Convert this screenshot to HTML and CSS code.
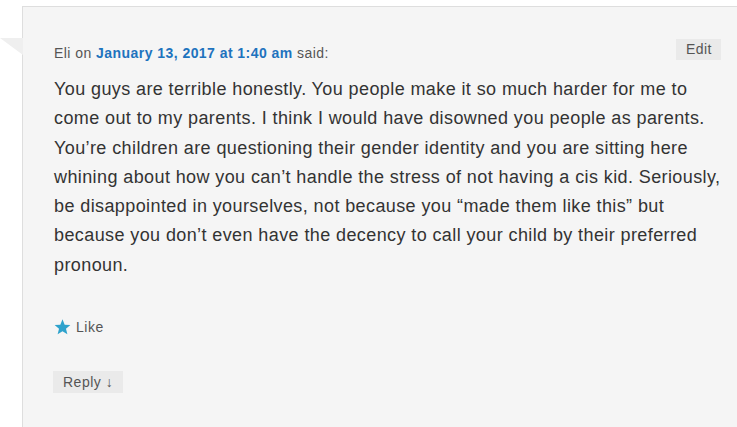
FILE: index.html
```html
<!DOCTYPE html>
<html>
<head>
<meta charset="utf-8">
<link rel="stylesheet" href="styles.css">
</head>
<body>
<div class="wrap">
  <div class="comment">
    <span class="arrow"></span>
    <div class="meta-row">
      <p class="meta">Eli on <a href="#">January 13, 2017 at 1:40 am</a> said:</p>
      <a class="edit" href="#">Edit</a>
    </div>
    <p class="body">You guys are terrible honestly. You people make it so much harder for me to come out to my parents. I think I would have disowned you people as parents. You’re children are questioning their gender identity and you are sitting here whining about how you can’t handle the stress of not having a cis kid. Seriously, be disappointed in yourselves, not because you “made them like this” but because you don’t even have the decency to call your child by their preferred pronoun.</p>
    <div class="like">
      <svg class="star" width="17" height="16" viewBox="0 0 24 23"><path d="M12 0.5l3.1 7.6 8.2 0.6-6.3 5.3 2 8-7-4.4-7 4.4 2-8L0.7 8.7l8.2-0.6z" fill="#2ea2cc"/></svg>
      <span>Like</span>
    </div>
    <a class="reply" href="#">Reply ↓</a>
  </div>
</div>
</body>
</html>
```
FILE: styles.css
```css
html, body {
  margin: 0;
  padding: 0;
  background: #fff;
  overflow: hidden;
}
body {
  font-family: "Liberation Sans", Arial, sans-serif;
  color: #333;
}
.wrap {
  padding: 6px 0 0 22px;
}
.comment {
  position: relative;
  width: 730px;
  height: 440px;
  background: #f5f5f5;
  border-top: 1px solid #dedede;
  border-left: 1px solid #dedede;
  padding: 32px 0 0 31px;
  box-sizing: border-box;
}
.arrow {
  position: absolute;
  left: -23px;
  top: 31px;
  width: 0;
  height: 0;
  border-top: 17px solid #efefef;
  border-left: 23px solid transparent;
}
.meta-row {
  display: flex;
  justify-content: space-between;
  align-items: flex-start;
  padding-right: 31px;
}
.meta {
  margin: 4px 0 0;
  font-size: 14px;
  line-height: 20px;
  letter-spacing: 0.45px;
  color: #555;
}
.meta a {
  color: #1e73be;
  font-weight: bold;
  text-decoration: none;
}
.edit {
  background: #eaeaea;
  color: #555;
  font-size: 14px;
  line-height: 21px;
  letter-spacing: 0.5px;
  padding: 0 9px 0 10px;
  text-decoration: none;
}
.body {
  margin: 12px 0 0;
  font-size: 18px;
  line-height: 29.3px;
  letter-spacing: 0.4px;
  color: #333;
  width: 680px;
}
.like {
  display: flex;
  align-items: center;
  gap: 5px;
  margin-top: 39px;
  font-size: 14px;
  letter-spacing: 0.5px;
  color: #555;
}
.star {
  display: block;
}
.reply {
  display: inline-block;
  margin-top: 36px;
  background: #eaeaea;
  color: #555;
  font-size: 14px;
  line-height: 22px;
  letter-spacing: 0.5px;
  padding: 0 10px;
  text-decoration: none;
  margin-left: -1px;
}
```
